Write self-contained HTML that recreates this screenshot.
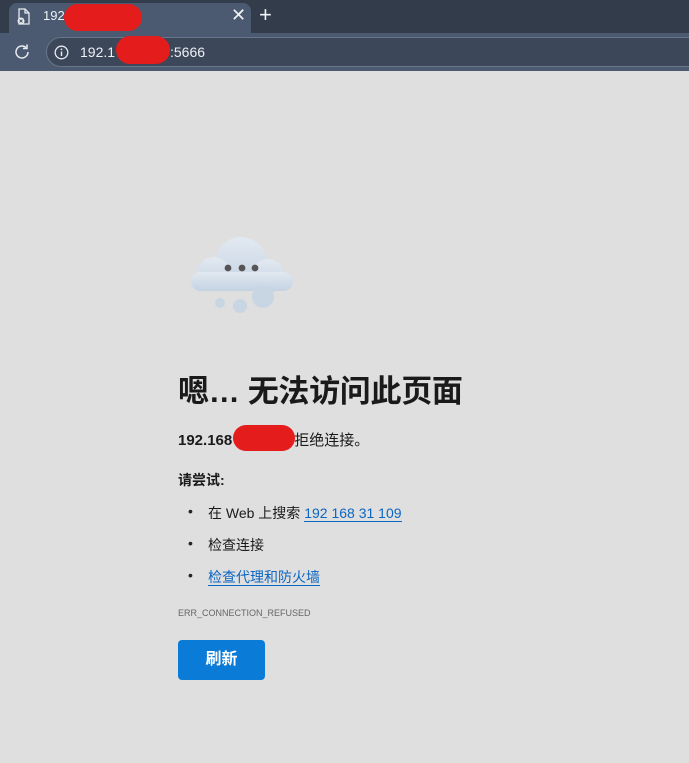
<!DOCTYPE html>
<html><head><meta charset="utf-8"><style>
body{margin:0;width:689px;height:763px;background:#dfdfdf;font-family:"Liberation Sans","Noto Sans CJK SC",sans-serif;position:relative;overflow:hidden}
.tabbar{position:absolute;left:0;top:0;width:689px;height:33px;background:#333c4b}
.tab{position:absolute;left:9px;top:3px;width:242px;height:30px;background:#4b5a70;border-radius:8px 8px 0 0}
.toolbar{position:absolute;left:0;top:33px;width:689px;height:38px;background:#4b5a70}
.addr{position:absolute;left:46px;top:4px;width:660px;height:30px;border-radius:16px;background:#3c4759;border:1px solid #67768a;box-sizing:border-box}
.t{position:absolute;color:#eef1f5;font-size:14px}
.red{position:absolute;background:#e51c1c;border-radius:14px}
.c{position:absolute;left:178px;color:#1a1a1a}
.b{position:absolute;left:188px;font-size:14px;color:#222}
a{color:#0b66c2;text-decoration:none;border-bottom:1px solid #0b66c2}
</style></head><body>
<div class="tabbar"><div class="tab">
<svg style="position:absolute;left:7px;top:5px" width="16" height="18" viewBox="0 0 16 18"><path d="M3 1h6l4 4v11H3z" fill="none" stroke="#e8ecf1" stroke-width="1.3"/><path d="M9 1v4h4" fill="none" stroke="#e8ecf1" stroke-width="1.3"/><circle cx="5" cy="13" r="3.5" fill="#e8ecf1"/><path d="M3.6 11.6l2.8 2.8M6.4 11.6l-2.8 2.8" stroke="#4b5a70" stroke-width="1"/></svg>
<div class="t" style="left:34px;top:5px;font-size:13px">192.</div>
<div class="t" style="left:222px;top:2px;font-size:18px">✕</div>
</div>
<div class="red" style="left:64px;top:4px;width:78px;height:27px"></div>
<div class="t" style="left:259px;top:2px;font-size:22px;font-weight:300">+</div>
</div>
<div class="toolbar">
<svg style="position:absolute;left:13px;top:10px" width="18" height="18" viewBox="0 0 18 18"><path d="M15 9a6 6 0 1 1-2-4.5" fill="none" stroke="#e8ecf1" stroke-width="1.5"/><path d="M14 1.5v4h-4" fill="none" stroke="#e8ecf1" stroke-width="1.5"/></svg>
<div class="addr"></div>
<svg style="position:absolute;left:54px;top:12px" width="15" height="15" viewBox="0 0 15 15"><circle cx="7.5" cy="7.5" r="6.3" fill="none" stroke="#e8ecf1" stroke-width="1.3"/><path d="M7.5 6.5v4.5" stroke="#e8ecf1" stroke-width="1.4"/><circle cx="7.5" cy="4.4" r=".9" fill="#e8ecf1"/></svg>
<div class="t" style="left:80px;top:11px">192.1</div>
<div class="red" style="left:116px;top:3px;width:54px;height:28px"></div>
<div class="t" style="left:170px;top:11px">:5666</div>
</div>
<svg style="position:absolute;left:0;top:0" width="689" height="763">
<defs><linearGradient id="g" x1="0" y1="0" x2="0" y2="1"><stop offset="0" stop-color="#e2e9f1"/><stop offset="1" stop-color="#c3d2e2"/></linearGradient></defs>
<g fill="url(#g)">
<circle cx="241" cy="263" r="26"/>
<circle cx="214" cy="274" r="17"/>
<circle cx="268" cy="276" r="17"/>
<rect x="191" y="272" width="102" height="19" rx="9.5"/>
</g>
<g fill="#c8d5e3"><circle cx="263" cy="297" r="11"/><circle cx="240" cy="306" r="7"/><circle cx="220" cy="303" r="5"/></g>
<circle cx="228" cy="268" r="3.4" fill="#555"/><circle cx="242" cy="268" r="3.4" fill="#555"/><circle cx="255" cy="268" r="3.4" fill="#555"/>
</svg>
<div class="c" style="top:366px;font-size:31px;font-weight:bold;letter-spacing:-0.3px">嗯… 无法访问此页面</div>
<div class="c" style="top:429px;font-size:15px;font-weight:bold">192.168<span style="font-weight:normal;margin-left:62px">拒绝连接。</span></div>
<div class="red" style="left:233px;top:425px;width:62px;height:26px"></div>
<div class="c" style="top:470px;font-size:14px;font-weight:bold">请尝试:</div>
<div class="b" style="top:503px">•</div><div class="c" style="left:208px;top:503px;font-size:14px">在 Web 上搜索 <a>192 168 31 109</a></div>
<div class="b" style="top:535px">•</div><div class="c" style="left:208px;top:535px;font-size:14px">检查连接</div>
<div class="b" style="top:567px">•</div><div class="c" style="left:208px;top:567px;font-size:14px"><a>检查代理和防火墙</a></div>
<div class="c" style="top:608px;font-size:9px;color:#666">ERR_CONNECTION_REFUSED</div>
<div style="position:absolute;left:178px;top:640px;width:87px;height:40px;background:#0a7bd6;border-radius:4px;color:#fff;font-weight:bold;font-size:16px;text-align:center;line-height:40px">刷新</div>
</body></html>
